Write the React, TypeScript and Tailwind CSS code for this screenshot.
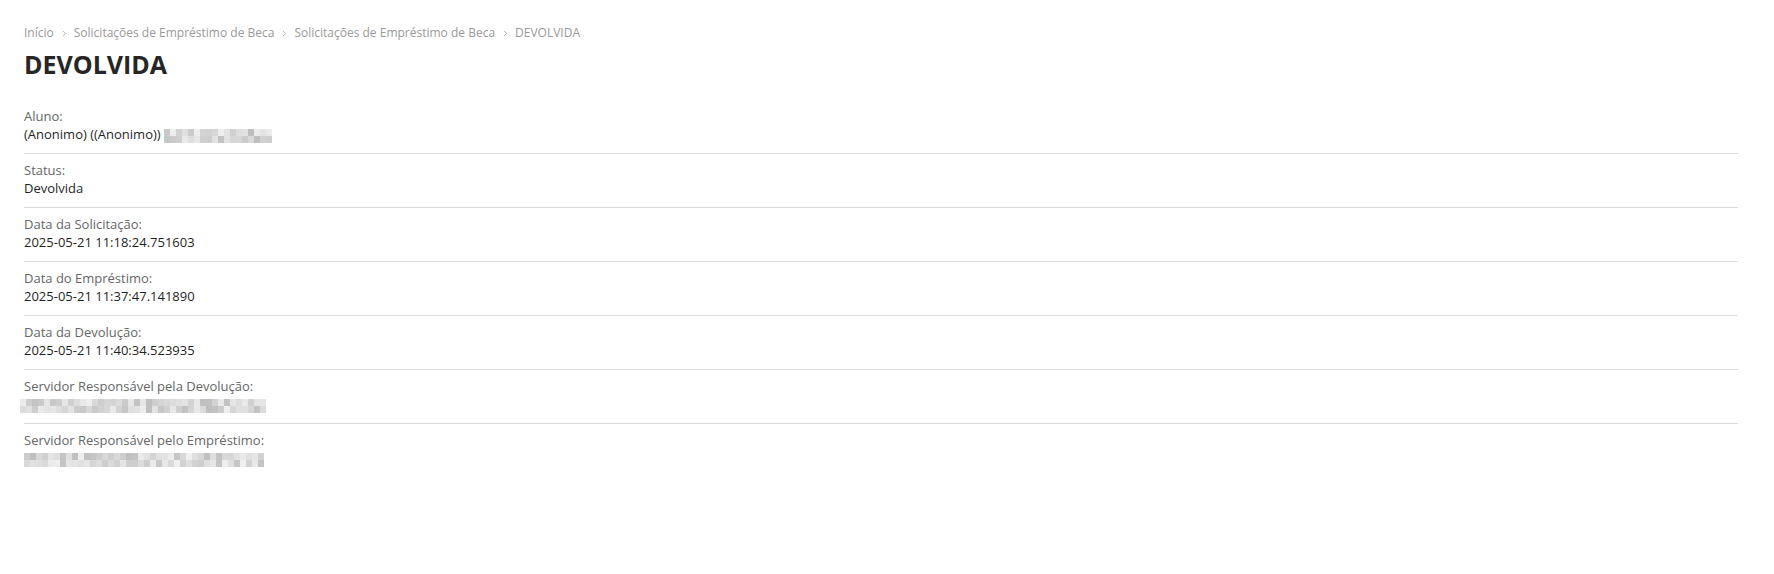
import { ChevronRight } from "lucide-react"

type Field = {
  label: string
  value?: string
  blur?: { cols: number; rows: number; seed: number; offset?: string }
}

const fields: Field[] = [
  { label: "Aluno:", value: "(Anonimo) ((Anonimo)) ", blur: { cols: 18, rows: 2, seed: 3 } },
  { label: "Status:", value: "Devolvida" },
  { label: "Data da Solicitação:", value: "2025-05-21 11:18:24.751603" },
  { label: "Data do Empréstimo:", value: "2025-05-21 11:37:47.141890" },
  { label: "Data da Devolução:", value: "2025-05-21 11:40:34.523935" },
  { label: "Servidor Responsável pela Devolução:", blur: { cols: 41, rows: 2, seed: 11, offset: "-ml-[4px]" } },
  { label: "Servidor Responsável pelo Empréstimo:", blur: { cols: 40, rows: 2, seed: 27 } },
]

// pixelated placeholder for blurred personal data
function Mosaic({ cols, rows, seed }: { cols: number; rows: number; seed: number }) {
  let s = seed * 9301 + 49297
  const rand = () => {
    s = (s * 9301 + 49297) % 233280
    return s / 233280
  }
  const grid = Array.from({ length: rows }, () =>
    Array.from({ length: cols }, () => {
      const v = Math.round(190 + rand() * 50)
      return `rgb(${v},${v},${v})`
    })
  )
  return (
    <span className="inline-flex flex-col align-middle">
      {grid.map((row, i) => (
        <span key={i} className="flex">
          {row.map((c, j) => (
            <span key={j} className="w-[6px] h-[7px]" style={{ backgroundColor: c }} />
          ))}
        </span>
      ))}
    </span>
  )
}

function Crumb({ text, last }: { text: string; last?: boolean }) {
  return (
    <span className="flex items-center">
      <span>{text}</span>
      {!last && <ChevronRight className="w-[9px] h-[9px] ml-[6px] mr-[5px] text-[#aaa]" strokeWidth={2.5} />}
    </span>
  )
}

export default function App() {
  return (
    <div className="min-h-screen bg-white pl-6 pr-9 pt-[24px] font-['Open_Sans',sans-serif]">
      <nav className="flex items-center text-[12px] leading-[18px] text-[#999]">
        <Crumb text="Início" />
        <Crumb text="Solicitações de Empréstimo de Beca" />
        <Crumb text="Solicitações de Empréstimo de Beca" />
        <Crumb text="DEVOLVIDA" last />
      </nav>

      <h1 className="mt-[7px] text-[25px] leading-[30px] font-bold text-[#262626]">DEVOLVIDA</h1>

      <div className="mt-[21px]">
        {fields.map((f, i) => (
          <div
            key={f.label}
            className={`pt-[7px] pb-[10px] text-[13px] leading-[18px] ${
              i < fields.length - 1 ? "border-b border-[#dcdcdc]" : ""
            }`}
          >
            <div className="text-[#666]">{f.label}</div>
            <div className="flex items-center h-[18px] text-[#1f1f1f] whitespace-pre">
              {f.value && <span>{f.value}</span>}
              {f.blur && (
                <span className={f.blur.offset ?? ""}>
                  <Mosaic cols={f.blur.cols} rows={f.blur.rows} seed={f.blur.seed} />
                </span>
              )}
            </div>
          </div>
        ))}
      </div>
    </div>
  )
}
